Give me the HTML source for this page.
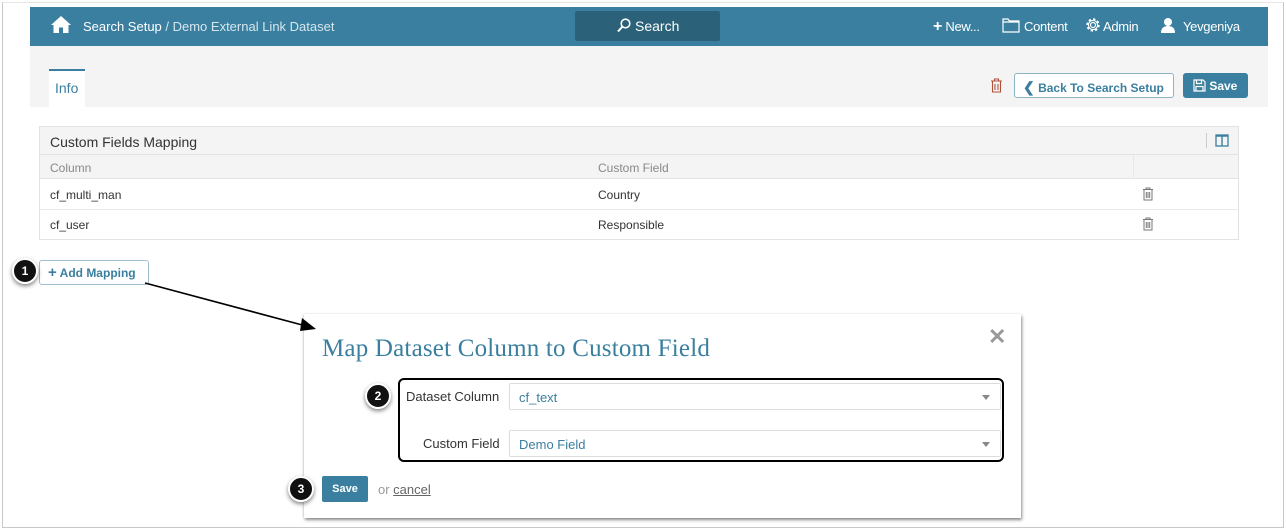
<!DOCTYPE html>
<html><head><meta charset="utf-8"><style>
*{box-sizing:border-box;margin:0;padding:0}
body{width:1286px;height:530px;background:#fff;font-family:"Liberation Sans",sans-serif;position:relative;overflow:hidden}
.a{position:absolute}
.frame{left:2px;top:2px;width:1282px;height:526px;border:1px solid #c8c8c8;border-top:1px solid #e6e6e6}
.hdr{left:30px;top:7px;width:1238px;height:39px;background:#3a7f9f;color:#fff;font-size:13px}
.hdr .t{position:absolute;top:12px}
.gray{left:30px;top:46px;width:1238px;height:61px;background:#f4f4f4}
.btn{border:1px solid #3a7f9f;border-radius:3px;font-weight:bold;font-size:12px}
.tbl{left:39px;top:126px;width:1200px;height:114px;border:1px solid #e3e3e3}
.cell{font-size:12px;color:#333}
.sel{height:27px;border:1px solid #dcdcdc;border-radius:2px;background:#fff;color:#3a7f9f;font-size:13px;padding:6px 9px}
.sel:after{content:"";position:absolute;right:10px;top:11px;border:4px solid transparent;border-top:5px solid #888}
.badge{width:26px;height:26px;border-radius:50%;background:#111;border:2px solid #fff;box-shadow:0 2px 4px rgba(0,0,0,.5);color:#fff;font-size:12px;font-weight:bold;text-align:center;line-height:22px}
</style></head><body>
<div class="a frame"></div>
<div class="a hdr">
 <svg class="a" style="left:20px;top:8px" width="22" height="19" viewBox="0 0 22 19"><path d="M11 1 L1 10 L3.5 10 L3.5 18 L9 18 L9 12.5 L13 12.5 L13 18 L18.5 18 L18.5 10 L21 10 Z" fill="#fff"/></svg>
 <span class="t" style="left:53px">Search Setup <span style="color:#d6e6ee">/ Demo External Link Dataset</span></span>
 <div class="a" style="left:545px;top:4px;width:145px;height:30px;background:#2c6279;border-radius:2px"></div>
 <svg class="a" style="left:587px;top:11px" width="14" height="15" viewBox="0 0 14 15"><circle cx="8.5" cy="5.5" r="4.3" stroke="#fff" stroke-width="1.6" fill="none"/><path d="M5.5 8.5 L1 13.5" stroke="#fff" stroke-width="2"/></svg>
 <span class="t" style="left:605px;font-size:14px;top:11px">Search</span>
 <span class="t" style="left:903px;letter-spacing:-0.3px"><b style="font-size:16px;line-height:10px">+</b> New...</span>
 <svg class="a" style="left:972px;top:11px" width="18" height="15" viewBox="0 0 18 15"><path d="M1 1h5l1.5 2H17v11H1z M1 4h16" stroke="#fff" stroke-width="1.2" fill="none"/></svg>
 <span class="t" style="left:994px;letter-spacing:-0.3px">Content</span>
 <svg class="a" style="left:1055px;top:10px" width="16" height="16" viewBox="0 0 16 16"><circle cx="8" cy="8" r="2.5" stroke="#fff" stroke-width="1.2" fill="none"/><circle cx="8" cy="8" r="5.5" stroke="#fff" stroke-width="2.4" stroke-dasharray="2.2 2.1" fill="none"/><circle cx="8" cy="8" r="4.6" stroke="#fff" stroke-width="1.1" fill="none"/></svg>
 <span class="t" style="left:1073px;letter-spacing:-0.3px">Admin</span>
 <svg class="a" style="left:1130px;top:10px" width="16" height="16" viewBox="0 0 16 16"><circle cx="8" cy="5" r="4" fill="#fff"/><path d="M1 16 Q1 9 8 9 Q15 9 15 16Z" fill="#fff"/></svg>
 <span class="t" style="left:1153px;letter-spacing:-0.3px">Yevgeniya</span>
</div>
<div class="a gray"></div>
<div class="a" style="left:49px;top:69px;width:36px;height:38px;background:#fff;border-top:2px solid #3a7f9f;color:#3a7f9f;font-size:14px;padding:9px 0 0 6px">Info</div>
<svg class="a" style="left:990px;top:78px" width="13" height="15" viewBox="0 0 13 15"><path d="M1 3h11M4.5 3V1h4v2M2.5 3.5v10.5h8V3.5M5 6v6M8 6v6" stroke="#b0523a" stroke-width="1.1" fill="none"/></svg>
<div class="a btn" style="left:1014px;top:73px;width:160px;height:25px;background:#fff;color:#3a7f9f;padding:5px 0 0 8px;border-color:#8cb4c7"><span style="font-size:14px">❮</span> Back To Search Setup</div>
<div class="a btn" style="left:1183px;top:73px;width:65px;height:25px;background:#3a7f9f;color:#fff;padding:5px 0 0 9px">
<svg style="vertical-align:-2px" width="13" height="13" viewBox="0 0 13 13"><path d="M1 1h9l2 2v9H1z M3.5 1v3.5h5V1 M3 7.5h7V12H3z" stroke="#fff" stroke-width="1.2" fill="none"/></svg> Save</div>
<div class="a tbl">
 <div class="a" style="left:0;top:0;width:1198px;height:28px;background:#f4f4f4;border-bottom:1px solid #e3e3e3"></div>
 <span class="a" style="left:10px;top:7px;font-size:14px;color:#333">Custom Fields Mapping</span>
 <div class="a" style="left:1166px;top:6px;width:1px;height:15px;background:#ccc"></div>
 <svg class="a" style="left:1175px;top:7px" width="14" height="13" viewBox="0 0 14 13"><rect x="1" y="1" width="12" height="11" stroke="#3a7f9f" stroke-width="1.3" fill="none"/><path d="M7 1v11M1 2h12" stroke="#3a7f9f" stroke-width="1.4"/></svg>
 <div class="a" style="left:0;top:28px;width:1198px;height:24px;background:#f4f4f4;border-bottom:1px solid #e3e3e3"></div>
 <div class="a" style="left:1093px;top:28px;width:1px;height:24px;background:#e8e8e8"></div>
 <span class="a cell" style="left:10px;top:34px;color:#888">Column</span>
 <span class="a cell" style="left:558px;top:34px;color:#888">Custom Field</span>
 <span class="a cell" style="left:10px;top:61px">cf_multi_man</span>
 <span class="a cell" style="left:558px;top:61px">Country</span>
 <div class="a" style="left:0;top:82px;width:1198px;height:1px;background:#eaeaea"></div>
 <span class="a cell" style="left:10px;top:91px">cf_user</span>
 <span class="a cell" style="left:558px;top:91px">Responsible</span>
 <svg class="a" style="left:1102px;top:60px" width="12" height="14" viewBox="0 0 12 14"><path d="M1 2.5h10M4 2.5V1h4v1.5M2 3v10h8V3M4.3 5v6M6 5v6M7.7 5v6" stroke="#777" stroke-width="1" fill="none"/></svg>
 <svg class="a" style="left:1102px;top:90px" width="12" height="14" viewBox="0 0 12 14"><path d="M1 2.5h10M4 2.5V1h4v1.5M2 3v10h8V3M4.3 5v6M6 5v6M7.7 5v6" stroke="#777" stroke-width="1" fill="none"/></svg>
</div>
<div class="a btn" style="left:39px;top:260px;width:110px;height:25px;background:#fff;color:#3a7f9f;padding:5px 0 0 8px;border-color:#9cc0d0"><span style="font-size:15px;line-height:10px">+</span> Add Mapping</div>
<div class="a badge" style="left:12px;top:258px">1</div>
<div class="a" style="left:304px;top:314px;width:717px;height:204px;background:#fff;box-shadow:1px 2px 3px rgba(0,0,0,.45),-1px 0 2px rgba(0,0,0,.1)">
 <span class="a" style="left:18px;top:21px;font-family:'Liberation Serif',serif;font-size:25px;color:#3a7f9f;letter-spacing:0.2px">Map Dataset Column to Custom Field</span>
 <span class="a" style="left:684px;top:10px;font-size:22px;color:#999;font-weight:bold">✕</span>
 <div class="a" style="left:94px;top:64px;width:606px;height:84px;border:2px solid #000;border-radius:6px"></div>
 <span class="a" style="left:102px;top:75px;font-size:13px;color:#333">Dataset Column</span>
 <div class="a sel" style="left:205px;top:69px;width:492px">cf_text</div>
 <span class="a" style="left:119px;top:122px;font-size:13px;color:#333">Custom Field</span>
 <div class="a sel" style="left:205px;top:116px;width:492px">Demo Field</div>
 <div class="a" style="left:18px;top:162px;width:46px;height:26px;background:#3a7f9f;border-radius:2px;color:#fff;font-size:11px;font-weight:bold;text-align:center;line-height:26px">Save</div>
 <span class="a" style="left:74px;top:168px;font-size:13px;color:#999">or <u style="color:#666">cancel</u></span>
</div>
<svg class="a" style="left:0;top:0" width="330" height="340"><line x1="145" y1="283" x2="306" y2="326" stroke="#000" stroke-width="1.6"/><path d="M316 329 L302 318 L300 331Z" fill="#000"/></svg>
<div class="a badge" style="left:365px;top:383px">2</div>
<div class="a badge" style="left:288px;top:476px">3</div>
</body></html>
